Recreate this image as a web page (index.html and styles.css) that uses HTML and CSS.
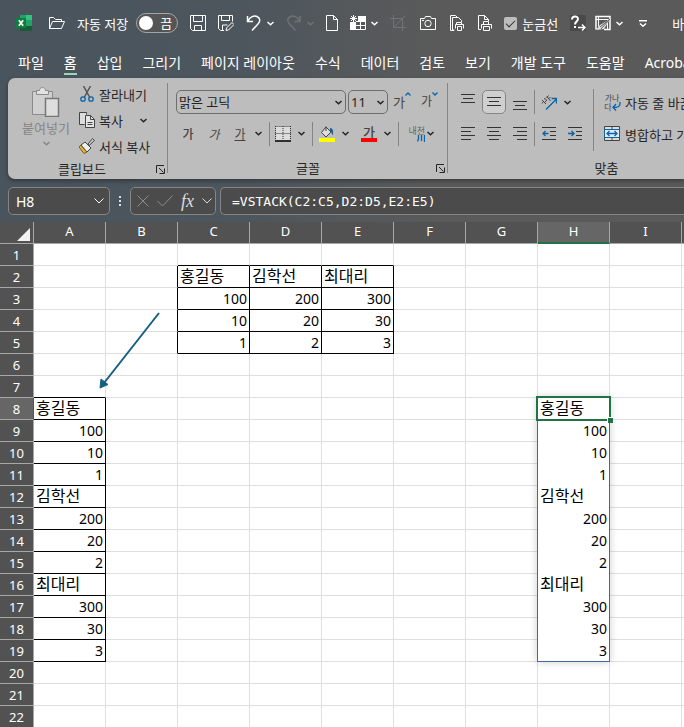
FILE: index.html
```html
<!DOCTYPE html>
<html lang="ko">
<head>
<meta charset="utf-8">
<title>VSTACK</title>
<link rel="stylesheet" href="styles.css">
</head>
<body>
<svg class="defs" aria-hidden="true">
  <symbol id="chev" viewBox="0 0 7 5"><path d="M.5 1l3 2.700 3-2.700" fill="none" stroke="currentColor" stroke-width="1.500"/></symbol>
  <symbol id="launch" viewBox="0 0 9 9"><path d="M.5 8V.5H8M3 3l4.500 4.500M8.500 3.500v5h-5" fill="none" stroke="currentColor"/></symbol>
</svg>
<header class="titlebar">
  <svg class="i16 brand" viewBox="0 0 16 16"><path d="M4 0h6v5H4z" fill="#21a366"/><path d="M10 0h6v5h-6z" fill="#33c481"/><path d="M4 5h6v6H4z" fill="#107c41"/><path d="M10 5h6v6h-6z" fill="#21a366"/><path d="M4 11h12v5H4z" fill="#185c37"/><path d="M0 3h10v10H0z" fill="#107c41"/><path d="M2.800 5.200l4.400 5.600M7.200 5.200l-4.400 5.600" stroke="#fff" stroke-width="1.600"/></svg>
  <button class="tb" aria-label="열기"><svg class="i16" viewBox="0 0 16 16"><path d="M.5 13.500v-11h4l2 2h6v2M.5 13.500l3-7h12l-3 7z" class="ln"/></svg></button>
  <label class="autosave">자동 저장
    <span class="toggle"><input type="checkbox" role="switch"><span class="state">끔</span></span>
  </label>
  <button class="tb" aria-label="저장"><svg class="i16" viewBox="0 0 16 16"><path d="M.5.5h15v15h-13l-2-2zM3.500.5v6h9v-6M4.500 15.500v-5h7v5" class="ln"/></svg></button>
  <button class="tb" aria-label="다른 이름으로 저장"><svg class="i16" viewBox="0 0 16 16"><path d="M6 15.500H2.500l-2-2V.5h14v6M3.500.5v5h8v-5M4.500 15v-5h5M8 15.500l.5-2.500 5.500-5.500 2 2-5.500 5.500z" class="ln"/></svg></button>
  <div class="pair"><button class="tb" aria-label="실행 취소"><svg class="i16" viewBox="0 0 16 16"><path d="M1.500 1v5.500H7M2 6c2-4 6-6 9-4.500 3.500 1.800 3.500 5 1 7.500L6 15.500" class="ln thick"/></svg></button><button class="tb" aria-label="실행 취소 목록"><svg class="chev"><use href="#chev"/></svg></button></div>
  <div class="pair dim"><button class="tb" aria-label="다시 실행"><svg class="i16" viewBox="0 0 16 16"><path d="M14 1v5.500H8.500M13.500 6c-2-4-6-6-9-4.500-3.500 1.800-3.500 5-1 7.500l6 6.500" class="ln thick"/></svg></button><button class="tb" aria-label="다시 실행 목록"><svg class="chev"><use href="#chev"/></svg></button></div>
  <button class="tb" aria-label="새로 만들기"><svg class="i12" viewBox="0 0 12 16"><path d="M.5.5h7l4 4v11H.5zM7.500.5v4h4" class="ln"/></svg></button>
  <div class="pair"><button class="tb" aria-label="틀 고정"><svg class="i16" viewBox="0 0 16 16"><path d="M8 1h8v5H8zM0 7h6v8H0z" fill="currentColor"/><path d="M3.500 0v7M0 3.500h7M1 1l5 5M6 1L1 6M6 10.500h10M10.500 6v9M6 14.500h9.500V6M6 6.500h10" class="ln"/></svg></button><button class="tb" aria-label="틀 고정 목록"><svg class="chev"><use href="#chev"/></svg></button></div>
  <button class="tb dim" aria-label="자르기"><svg class="i16" viewBox="0 0 16 16"><path d="M3.500 0v12.500H16M0 3.500h12.500V16M3.500 12.500L15.500.5" class="ln"/></svg></button>
  <div class="capture">
    <button class="tb" aria-label="카메라"><svg class="i16" viewBox="0 0 16 16"><path d="M.5 3.500h4l1-2h5l1 2h4v11H.5z" class="ln"/><circle cx="8" cy="8.500" r="3.200" class="ln"/><path d="M2 5.500h2" class="ln"/></svg></button>
    <button class="tb" aria-label="인쇄 미리 보기"><svg class="i14" viewBox="0 0 14 16"><path d="M4 15.500H.5V.5h5l2 2M4.500 15H2.500V2.500h6l3 3V7M6.500 9V7.500h5V9M5.500 13.500v-4h8v4M7.500 11.500h4v4h-4z" class="ln"/></svg></button>
    <button class="tb" aria-label="빠른 인쇄"><svg class="i14" viewBox="0 0 14 16"><path d="M3 14.500H.5V.5h6l4 4V6M6.500.5v4h4M5.500 9V6.500h5V9M3.500 13.500v-4h10v4M5.500 11.500h6v4h-6z" class="ln"/></svg></button>
  </div>
  <label class="gridchk"><input type="checkbox" checked>눈금선</label>
  <div class="tools">
    <button class="tb help" aria-label="도움말 이동"><svg class="i16" viewBox="0 0 16 16"><path d="M2 4.500C2 .5 8 .5 8 4c0 2.500-3 2.500-3 5.500M5 11v2" class="ln bold"/><path d="M8 12.500h7M12 9.500l3 3-3 3" class="ln thick"/></svg></button>
    <div class="pair"><button class="tb" aria-label="그리기 표"><svg class="i16" viewBox="0 0 16 16"><path d="M1 14.500V1.500h14v13H9" class="ln thick"/><path d="M.5 4.500h15M3.500 1.500v10M12.500 5v9" class="ln"/><path d="M15 4L9 14l-8 1 4-5z" fill="#e4e4e4"/><path d="M15 4l-9 10M15 4L5 12" stroke="#5a5a5a"/></svg></button><button class="tb" aria-label="그리기 표 목록"><svg class="chev"><use href="#chev"/></svg></button></div>
  </div>
  <button class="tb custom" aria-label="빠른 실행 도구 모음 사용자 지정"><svg class="i8" viewBox="0 0 8 7"><path d="M0 .8h8M1 3.500l3 2.700 3-2.700" class="ln thick"/></svg></button>
  <span class="docname">바로 가기</span>
</header>

<nav class="tabs">
  <a href="#">파일</a><a href="#" class="on">홈</a><a href="#">삽입</a><a href="#">그리기</a><a href="#">페이지 레이아웃</a><a href="#">수식</a><a href="#">데이터</a><a href="#">검토</a><a href="#">보기</a><a href="#">개발 도구</a><a href="#">도움말</a><a href="#">Acrobat</a>
</nav>

<section class="ribbon">
  <div class="group clip">
    <div class="gbody">
      <button class="paste">
        <svg width="28" height="30" viewBox="0 0 28 30"><path d="M.5 4.500h20v23H.5z" fill="#d0d0d0" stroke="#8b8b8b"/><path d="M4.500 7.500v-4h3c0-4 6-4 6 0h3v4z" fill="#e2e2e2" stroke="#8b8b8b"/><path d="M13.500 11.500h13v18h-13z" fill="#dedede" stroke="#777" stroke-width="1.500"/></svg>
        <span>붙여넣기</span>
        <svg class="chev"><use href="#chev"/></svg>
      </button>
      <div class="cliplist">
        <button><svg class="i16" viewBox="0 0 16 16"><path d="M4.500 0l6 11M11.500 0l-6 11" stroke="#555" stroke-width="1.500"/><circle cx="4" cy="13" r="2.200" class="bl"/><circle cx="12" cy="13" r="2.200" class="bl"/></svg>잘라내기</button>
        <button><svg class="i16" viewBox="0 0 16 16"><path d="M5.500 12.500H.5V.5h7v2" fill="#ddd" stroke="#444"/><path d="M6.500 3.500h5l4 4v8h-9z" fill="#e6e6e6" stroke="#444"/><path d="M11.500 3.500v4h4M8.500 10.500h5M8.500 12.500h5" fill="none" stroke="#444"/></svg>복사<svg class="chev"><use href="#chev"/></svg></button>
        <button><svg class="i16" viewBox="0 0 16 16"><path d="M2 7l6 7-3 1.500L0 9z" fill="#e5b238" stroke="#7b5d17"/><path d="M2 7l4-3 6 6-4 4z" fill="#eee" stroke="#444"/><path d="M9 6l4.500-5.500 2 2L10 7.500z" fill="#ccc" stroke="#444"/></svg>서식 복사</button>
      </div>
    </div>
    <div class="glabel">클립보드<button class="launch" aria-label="클립보드 설정"><svg><use href="#launch"/></svg></button></div>
  </div>

  <div class="group font">
    <div class="gbody col">
      <div class="frow top">
        <span class="sel name"><select aria-label="글꼴"><option>맑은 고딕</option></select><svg class="chev"><use href="#chev"/></svg></span>
        <span class="sel size"><select aria-label="글꼴 크기"><option>11</option></select><svg class="chev"><use href="#chev"/></svg></span>
        <button class="grow" aria-label="글꼴 크게">가<svg width="6" height="4" viewBox="0 0 6 4"><path d="M.5 3.500L3 1l2.500 2.500" class="bl"/></svg></button>
        <button class="grow small" aria-label="글꼴 작게">가<svg width="6" height="4" viewBox="0 0 6 4"><path d="M.5.5L3 3 5.500.5" class="bl"/></svg></button>
      </div>
      <div class="frow">
        <button class="sq"><b>가</b></button><button class="sq"><i>가</i></button><button class="sq"><u>가</u></button><button class="dd" aria-label="밑줄 종류"><svg class="chev"><use href="#chev"/></svg></button>
        <span class="sep"></span>
        <button class="sq" aria-label="테두리"><svg class="i16" viewBox="0 0 16 16"><path d="M1 0h14v14H1z" fill="#dcdcdc"/><path d="M.5.500h15M.5 7.500h15M.5 0v14M8 0v14M15.500 0v14" stroke="#333" stroke-dasharray="1 1"/><path d="M0 15h16" stroke="#000" stroke-width="1.500"/></svg></button><button class="dd" aria-label="테두리 종류"><svg class="chev"><use href="#chev"/></svg></button>
        <span class="sep"></span>
        <button class="sq fill" aria-label="채우기 색"><svg class="i16" viewBox="0 0 16 16"><path d="M7 1l5 5-5 5-4.500-4.500z" fill="#ddd" stroke="#444"/><path d="M7 5V.5" stroke="#444"/><path d="M11 2c3 0 3.500 3 3 7-2-1-1-4-3-4z" fill="#1b5f8f"/><path d="M0 12h16v4H0z" fill="#ff0"/></svg></button><button class="dd" aria-label="채우기 색 목록"><svg class="chev"><use href="#chev"/></svg></button>
        <button class="sq fc" aria-label="글꼴 색"><b>가</b><span class="bar"></span></button><button class="dd" aria-label="글꼴 색 목록"><svg class="chev"><use href="#chev"/></svg></button>
        <span class="sep"></span>
        <button class="sq pho" aria-label="윗주"><span>내천</span><svg width="8" height="7" viewBox="0 0 8 7"><path d="M1.500 0v4l-1 2.500M4.500 0v6M7.500 0v7" class="bl"/></svg></button><button class="dd" aria-label="윗주 목록"><svg class="chev"><use href="#chev"/></svg></button>
      </div>
    </div>
    <div class="glabel">글꼴<button class="launch" aria-label="글꼴 설정"><svg><use href="#launch"/></svg></button></div>
  </div>

  <div class="group align">
    <div class="gbody">
      <div class="col agrid">
        <div class="frow top">
          <button class="sq" aria-label="위쪽 맞춤"><svg class="i14" viewBox="0 0 14 16"><path d="M0 .5h14M2 4.500h10M0 8.500h14" class="al"/></svg></button>
          <button class="sq on" aria-label="가운데 맞춤"><svg class="i14" viewBox="0 0 14 16"><path d="M0 3.500h14M2 7.500h10M0 11.500h14" class="al"/></svg></button>
          <button class="sq" aria-label="아래쪽 맞춤"><svg class="i14" viewBox="0 0 14 16"><path d="M0 7.500h14M2 11.500h10M0 15.500h14" class="al"/></svg></button>
          <span class="sep"></span>
          <button class="sq" aria-label="방향"><svg class="i16" viewBox="0 0 16 16"><path d="M5 15.500L15.500 5M10.500 4.500h5v5" class="bl"/><path d="M1 6l4 4M4 8l2-2M6 2.500L9.500 7M8 4.500l1.500-1.500M3 4.500l2.500 1M1 9.500l1-1.500M5.500 4l2-2.500" fill="none" stroke="#444"/></svg></button><button class="dd" aria-label="방향 목록"><svg class="chev"><use href="#chev"/></svg></button>
        </div>
        <div class="frow">
          <button class="sq" aria-label="왼쪽 맞춤"><svg class="i14" viewBox="0 0 14 16"><path d="M0 1.500h14M0 5.500h10M0 9.500h14M0 13.500h10" class="al"/></svg></button>
          <button class="sq" aria-label="가로 가운데 맞춤"><svg class="i14" viewBox="0 0 14 16"><path d="M0 1.500h14M2 5.500h10M0 9.500h14M2 13.500h10" class="al"/></svg></button>
          <button class="sq" aria-label="오른쪽 맞춤"><svg class="i14" viewBox="0 0 14 16"><path d="M0 1.500h14M4 5.500h10M0 9.500h14M4 13.500h10" class="al"/></svg></button>
          <span class="sep"></span>
          <button class="sq" aria-label="내어쓰기"><svg class="i14" viewBox="0 0 14 16"><path d="M0 1.500h14M8 5.500h6M8 9.500h6M0 13.500h14" class="al"/><path d="M6.500 7.500H.8M3.500 5L1 7.500 3.500 10" class="bl thick"/></svg></button>
          <button class="sq" aria-label="들여쓰기"><svg class="i14" viewBox="0 0 14 16"><path d="M0 1.500h14M8 5.500h6M8 9.500h6M0 13.500h14" class="al"/><path d="M0 7.500h5.800M3.500 5L6 7.500 3.500 10" class="bl thick"/></svg></button>
        </div>
      </div>
      <span class="sep tall"></span>
      <div class="wraps">
        <button><span class="wicon"><span>가나</span><span>다</span><svg width="9" height="9" viewBox="0 0 9 9"><path d="M8 0v2c0 3-3 3.500-7 3.500M4 2L1 5.500 4 8.500" class="bl thick"/></svg></span>자동 줄 바꿈</button>
        <button><svg class="i16" viewBox="0 0 16 16"><path d="M.5.500h15v14H.5z" fill="#ddd" stroke="#444"/><path d="M8 0v4M8 11v4" stroke="#444"/><path d="M.5 3.500h15v8H.5z" fill="#e4eaf0" stroke="#0a62a9"/><path d="M3 7.500h10M5.500 5L3 7.500 5.500 10M10.500 5L13 7.500 10.500 10" class="bl thick"/></svg>병합하고 가운데 맞춤</button>
      </div>
    </div>
    <div class="glabel">맞춤</div>
  </div>
</section>

<section class="fbar">
  <div class="box namebox"><input aria-label="이름 상자" value="H8"><svg width="10" height="6" viewBox="0 0 10 6"><path d="M.5.5L5 5 9.500.5" class="ln"/></svg></div>
  <svg class="dots" width="2" height="11" viewBox="0 0 2 11"><path d="M0 0h2v2H0zM0 4h2v2H0zM0 8h2v2H0z" fill="#ddd"/></svg>
  <div class="box fx">
    <button aria-label="취소"><svg width="12" height="12" viewBox="0 0 12 12"><path d="M.5.5l11 11M11.500.5l-11 11" class="mut"/></svg></button>
    <button aria-label="입력"><svg width="16" height="12" viewBox="0 0 16 12"><path d="M.5 6l5 5L15.500.5" class="mut"/></svg></button>
    <button class="fn" aria-label="함수 삽입">fx</button>
    <button aria-label="함수 목록"><svg width="10" height="6" viewBox="0 0 10 6"><path d="M.5.5L5 5 9.500.5" class="ln"/></svg></button>
  </div>
  <div class="box formula"><input aria-label="수식 입력줄" value="=VSTACK(C2:C5,D2:D5,E2:E5)"></div>
</section>

<main class="sheet">
  <table>
    <thead><tr id="cols"><th class="corner"><svg width="13" height="13" viewBox="0 0 13 13"><path d="M13 0v13H0z" fill="#f2f2f2"/></svg></th></tr></thead>
    <tbody id="rows"></tbody>
  </table>
  <svg class="arrow" width="62" height="78" viewBox="0 0 62 78"><path d="M60 1L5 71" stroke="#156082" stroke-width="2"/><path d="M1 76l1-9 7 5.500z" fill="#156082" stroke="#156082"/></svg>
</main>
<script src="sheet.js"></script>
</body>
</html>
```
FILE: styles.css
```css
* { box-sizing: border-box; }
body {
  margin: 0;
  height: 100vh;
  overflow: hidden;
  display: flex;
  flex-direction: column;
  font-family: "Noto Sans", "Noto Sans CJK KR", sans-serif;
  font-size: 13px;
  color: #fff;
  background: linear-gradient(90deg, #49545d 0, #4d565d 240px, #5a5a5a 440px);
}
button, input, select { font: inherit; color: inherit; }
button { border: 0; padding: 0; background: none; display: flex; align-items: center; justify-content: center; }
svg { display: block; flex: none; }
.defs { position: absolute; width: 0; height: 0; }
.i16 { width: 16px; height: 16px; }
.i14 { width: 14px; height: 16px; }
.i12 { width: 12px; height: 16px; }
.i8 { width: 8px; height: 7px; }
.chev { width: 7px; height: 5px; }
.ln { fill: none; stroke: currentColor; }
.thick { stroke-width: 1.5; }
.bold { stroke-width: 2; }
.bl { fill: none; stroke: #0a62a9; stroke-width: 1.3; }
.al { fill: none; stroke: #333; }
.mut { fill: none; stroke: #8c8c8c; }

.titlebar { flex: none; height: 46px; padding-left: 16px; display: flex; align-items: center; gap: 12px; white-space: nowrap; overflow: hidden; }
.titlebar > * { flex: none; }
.brand { margin-right: 5px; }
.pair { display: flex; align-items: center; gap: 5px; }
.dim { color: #6f7376; }
.autosave { display: flex; align-items: center; gap: 8px; }
.toggle { width: 42px; height: 20px; border: 1px solid #a5a5a5; border-radius: 10px; background: #555; display: flex; align-items: center; gap: 7px; padding-left: 2px; }
.toggle input { appearance: none; margin: 0; width: 14px; height: 14px; border-radius: 50%; background: #fff; }
.state { line-height: 18px; }
.capture { display: flex; gap: 14px; margin-left: 2px; }
.gridchk { display: flex; align-items: center; gap: 5px; }
.gridchk input { appearance: none; margin: 0; width: 13px; height: 13px; border-radius: 2px; background: #bdbdbd; display: grid; place-items: center; }
.gridchk input::after { content: ""; width: 8px; height: 4px; border: solid #333; border-width: 0 0 1px 1px; transform: translateY(-1px) rotate(-45deg); }
.tools { display: flex; gap: 9px; }
.help { background: #4a4a4a; }
.custom { margin-left: 4px; }
.docname { margin-left: 13px; }

.tabs { flex: none; height: 32px; padding: 4px 0 0 18px; display: flex; gap: 20px; font-size: 14px; white-space: nowrap; overflow: hidden; }
.tabs a { flex: none; color: inherit; text-decoration: none; height: 26px; line-height: 25px; }
.tabs .on { font-weight: 500; border-bottom: 2px solid #9fd5b7; height: 25px; }

.ribbon { flex: none; margin-left: 8px; height: 101px; display: flex; overflow: hidden; color: #262626; background: #bdbdbd; border-radius: 7px 0 0 7px; box-shadow: 0 2px 4px rgba(0, 0, 0, .35); white-space: nowrap; }
.group { flex: none; position: relative; padding-top: 4px; display: flex; flex-direction: column; justify-content: space-between; }
.group::after { content: ""; position: absolute; right: 0; top: 5px; bottom: 6px; width: 1px; background: #858585; }
.gbody { display: flex; flex: 1; }
.col { flex-direction: column; }
.glabel { height: 20px; line-height: 18px; text-align: center; position: relative; }
.launch { position: absolute; right: 3px; top: 5px; }
.launch svg { width: 9px; height: 9px; }

.clip { width: 160px; }
.clip .glabel { padding-right: 12px; }
.paste { width: 76px; flex-direction: column; justify-content: flex-start; padding-top: 5px; color: #858585; }
.paste span { line-height: 23px; }
.paste .chev { margin-top: 1px; }
.cliplist { display: flex; flex-direction: column; margin-left: -5px; }
.cliplist button { height: 26px; gap: 4px; padding-bottom: 2px; justify-content: flex-start; }
.cliplist .chev { margin-left: 13px; }

.font { width: 280px; }
.frow { display: flex; align-items: center; height: 31px; }
.frow.top { height: 36px; padding-top: 4px; }
.sel { position: relative; height: 24px; color: #222; }
.sel select { appearance: none; width: 100%; height: 24px; border: 1px solid #6e6e6e; border-radius: 5px; background: none; padding: 0 2px; display: block; }
.sel .chev { position: absolute; right: 4px; top: 10px; }
.sel.name { width: 170px; margin-left: 8px; }
.sel.size { width: 40px; margin-left: 2px; }
.grow { align-items: flex-start; margin-left: 5px; line-height: 20px; color: #444; }
.grow.small { margin-left: 10px; font-size: 12px; }
.sq { width: 26px; height: 24px; color: #444; font-size: 12px; }
.sq b { font-weight: 500; }
.font .frow:not(.top) { padding-left: 7px; }
.dd { width: 16px; height: 24px; justify-content: flex-start; padding-left: 2px; }
.sep { width: 1px; height: 24px; background: #858585; }
.fill { margin-left: 1px; }
.fc { flex-direction: column; line-height: 12px; font-size: 13px; }
.bar { width: 16px; height: 4px; background: #f00; }
.pho { flex-direction: column; font-size: 9px; line-height: 9px; color: #666; align-items: flex-end; }

.align { width: 317px; }
.agrid { padding-left: 7px; width: 145px; }
.sq.on { width: 24px; margin: 0 1px; border: 1px solid #858585; border-radius: 5px; background: #cfcfcf; }
.agrid .sq + .sep { margin: 0 1px; }
.sep.tall { height: 62px; margin-top: 7px; }
.wraps { padding: 4px 0 0 10px; display: flex; flex-direction: column; }
.wraps button { height: 32px; gap: 5px; justify-content: flex-start; }
.wicon { width: 16px; height: 18px; display: grid; grid-template-columns: 8px 8px; font-size: 8px; line-height: 9px; color: #444; }
.wicon span:first-child { grid-column: span 2; }

.fbar { flex: none; display: flex; align-items: center; padding: 8px 0 7px 8px; height: 43px; }
.box { height: 28px; border: 1px solid #858585; border-radius: 5px; background: #4b4b4b; display: flex; align-items: center; }
.box input { border: 0; background: none; padding: 0; min-width: 0; flex: 1; outline: 0; }
.namebox { width: 102px; padding: 0 5px 0 7px; font-size: 14px; }
.dots { margin: 0 9px; }
.fx { width: 86px; padding: 0 3px 0 6px; justify-content: space-between; color: #ddd; }
.fn { font-family: "Liberation Serif", serif; font-style: italic; font-size: 18px; line-height: 20px; }
.formula { flex: 1; margin-left: 4px; padding-left: 11px; border-right: 0; border-radius: 5px 0 0 5px; font-family: "DejaVu Sans Mono", monospace; }

.sheet { flex: 1; position: relative; overflow: hidden; background: #fff; color: #000; min-height: 0; }
table { table-layout: fixed; width: 754px; border-collapse: separate; border-spacing: 0; }
th, td { height: 22px; padding: 0 2px; border: 0 solid #dfdfdf; border-width: 0 1px 1px 0; line-height: 21px; overflow: visible; white-space: nowrap; }
th { width: 72px; background: #525252; color: #fff; font-weight: 400; font-size: 13px; border-color: #a8a8a8; }
thead th { line-height: 18px; padding-bottom: 3px; }
.corner { width: 34px; padding: 3px 3px 0 0; }
.corner svg { margin-left: auto; }
tbody th { line-height: 19px; padding-top: 2px; }
th.sel-col { background: #666; border-bottom: 2px solid #217346; padding-bottom: 2px; }
th.sel-row { background: #666; border-right-color: #217346; }
td.txt { font-family: "Noto Sans CJK KR", sans-serif; font-size: 16px; text-align: left; line-height: 19px; padding-bottom: 2px; }
.num { font-size: 14px; text-align: right; }
.br { border-right-color: #000; }
.bb { border-bottom-color: #000; }
.plain { border-bottom-color: #fff; }
.anchor { position: relative; }
.spill { position: absolute; left: -1px; right: -1px; top: -1px; height: 265px; border: 1px solid #4468a6; box-shadow: 0 0 8px rgba(0, 0, 0, .2); }
.cursor { position: absolute; left: -2px; right: -2px; top: -2px; bottom: -2px; border: 2px solid #217346; }
.handle { position: absolute; right: -4px; bottom: -4px; width: 6px; height: 6px; background: #217346; border: solid #fff; border-width: 1px 0 0 1px; }
.arrow { position: absolute; left: 99px; top: 90px; }
```
FILE: sheet.js
```js
const columns = "ABCDEFGHIJ".split("");
const stacked = ["홍길동", 100, 10, 1, "김학선", 200, 20, 2, "최대리", 300, 30, 3];
const data = {
  C2: "홍길동", C3: 100, C4: 10, C5: 1,
  D2: "김학선", D3: 200, D4: 20, D5: 2,
  E2: "최대리", E3: 300, E4: 30, E5: 3
};
stacked.forEach((v, i) => { data["A" + (8 + i)] = v; data["H" + (8 + i)] = v; });

const boxed = (c, r) =>
  (c >= 2 && c <= 4 && r >= 2 && r <= 5) || (c === 0 && r >= 8 && r <= 19);

const head = document.getElementById("cols");
columns.forEach(name => {
  const th = document.createElement("th");
  th.textContent = name;
  if (name === "H") th.className = "sel-col";
  head.append(th);
});

const body = document.getElementById("rows");
for (let r = 1; r <= 22; r++) {
  const tr = document.createElement("tr");
  const th = document.createElement("th");
  th.textContent = r;
  if (r === 8) th.className = "sel-row";
  tr.append(th);
  columns.forEach((name, c) => {
    const td = document.createElement("td");
    const value = data[name + r];
    if (value !== undefined) {
      td.textContent = value;
      td.classList.add(typeof value === "number" ? "num" : "txt");
    }
    if (boxed(c, r) || boxed(c + 1, r)) td.classList.add("br");
    if (boxed(c, r) || boxed(c, r + 1)) td.classList.add("bb");
    if (name === "H" && r >= 8 && r <= 19) td.classList.add("plain");
    if (name === "H" && r === 8) {
      td.classList.add("anchor");
      ["spill", "cursor", "handle"].forEach(k => {
        const s = document.createElement("span");
        s.className = k;
        td.append(s);
      });
    }
    tr.append(td);
  });
  body.append(tr);
}
```
